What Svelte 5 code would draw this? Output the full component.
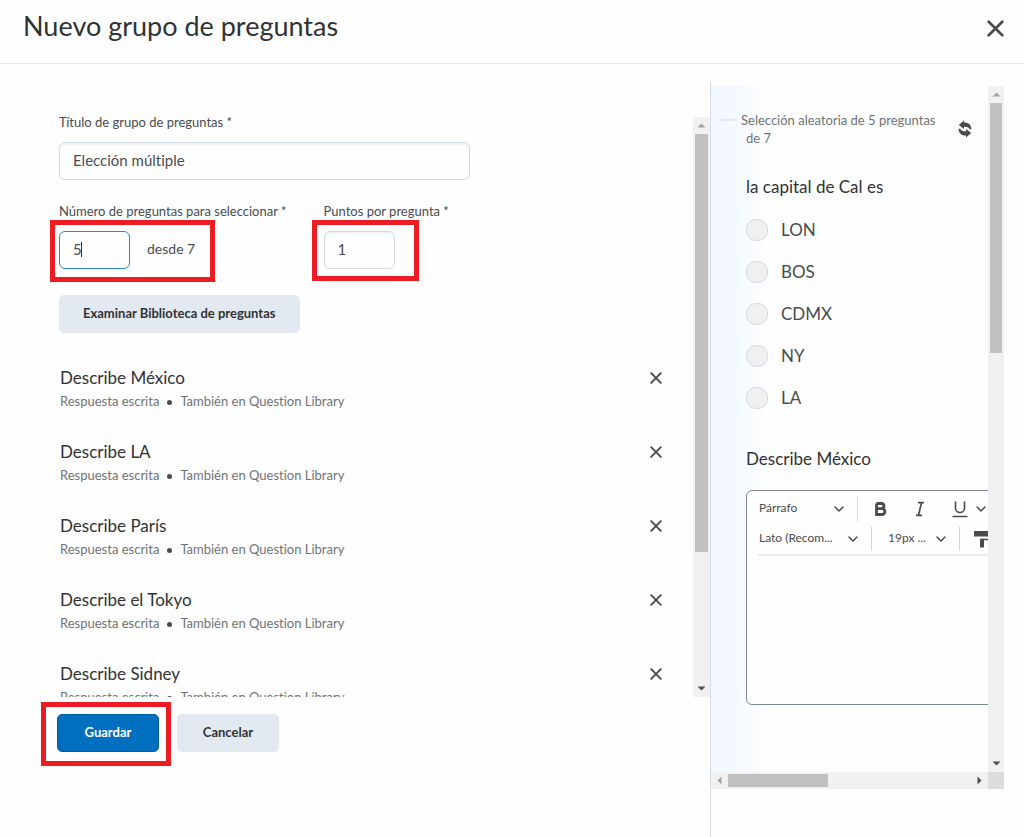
<script>
  let groupTitle = $state('Elección múltiple');
  let count = $state('5');
  let points = $state('1');
  const questions = ['Describe México', 'Describe LA', 'Describe París', 'Describe el Tokyo', 'Describe Sidney'];
  const answers = ['LON', 'BOS', 'CDMX', 'NY', 'LA'];
</script>

{#snippet cross(size)}
  <svg width={size} height={size} viewBox="0 0 12 12" aria-hidden="true">
    <path d="M1.2 1.2 10.8 10.8M10.8 1.2 1.2 10.8" fill="none" stroke="#494c4e" stroke-width="1.9" stroke-linecap="round" />
  </svg>
{/snippet}

{#snippet chevron()}
  <svg class="chevron" width="10" height="6" viewBox="0 0 10 6" aria-hidden="true">
    <path d="M1 1 5 5 9 1" fill="none" stroke="#494c4e" stroke-width="1.5" stroke-linecap="round" stroke-linejoin="round" />
  </svg>
{/snippet}

{#snippet arrow(points, color)}
  <svg class="arrow" width="17" height="17" viewBox="0 0 17 17" aria-hidden="true"><polygon {points} fill={color} /></svg>
{/snippet}

<div class="dialog" role="dialog" aria-labelledby="heading">
  <header>
    <h1 id="heading">Nuevo grupo de preguntas</h1>
    <button class="icon-button" aria-label="Cerrar">{@render cross(17)}</button>
  </header>

  <main>
    <section class="form">
      <div class="scroller">
        <div class="fields">
          <label for="title">Título de grupo de preguntas&nbsp;*</label>
          <input id="title" class="title" type="text" bind:value={groupTitle} />

          <div class="pair">
            <div class="field">
              <label for="count">Número de preguntas para seleccionar&nbsp;*</label>
              <div class="marked count">
                <input id="count" type="text" bind:value={count} />
                <span class="caret"></span>
                <span class="total">desde 7</span>
              </div>
            </div>
            <div class="field">
              <label for="points">Puntos por pregunta&nbsp;*</label>
              <div class="marked points">
                <input id="points" type="text" bind:value={points} />
              </div>
            </div>
          </div>

          <button class="button browse">Examinar Biblioteca de preguntas</button>

          <ul>
            {#each questions as name}
              <li>
                <div>
                  <div class="name">{name}</div>
                  <div class="meta"><span>Respuesta escrita</span><i></i><span>También en Question Library</span></div>
                </div>
                <button class="icon-button" aria-label="Quitar {name}">{@render cross(12)}</button>
              </li>
            {/each}
          </ul>
        </div>
        <div class="bar vertical form-bar">
          {@render arrow('4.5,10.5 8.5,6.5 12.5,10.5', '#a3a3a3')}
          <div class="track"><div class="thumb" style="height: 76.5%"></div></div>
          {@render arrow('4.5,6.5 12.5,6.5 8.5,10.5', '#505050')}
        </div>
      </div>
      <footer>
        <div class="marked save"><button class="button primary">Guardar</button></div>
        <button class="button">Cancelar</button>
      </footer>
    </section>

    <section class="preview">
      <div class="content">
        <div class="selection">
          <p>Selección aleatoria de 5 preguntas de 7</p>
          <button class="icon-button" aria-label="Actualizar">
            <svg width="16" height="18" viewBox="0 0 16 18" aria-hidden="true">
              <path d="M1.800 5 7 .5V2.500C11.500 2.500 14.200 4.500 14.500 9.300L12.800 9.300C11.800 7.300 9.800 6.700 7 6.800V9Z" fill="#494c4e" />
              <path d="M14.200 13 9 17.500V15.500C4.500 15.500 1.800 13.500 1.500 8.700L3.200 8.700C4.200 10.700 6.200 11.300 9 11.200V9Z" fill="#494c4e" />
            </svg>
          </button>
        </div>

        <fieldset>
          <legend>la capital de Cal es</legend>
          {#each answers as answer}
            <label class="answer"><input type="radio" name="capital" value={answer} />{answer}</label>
          {/each}
        </fieldset>

        <h2>Describe México</h2>
        <div class="editor">
          <div class="toolbar">
            <div class="tools">
              <div class="select paragraph">
                <select aria-label="Formato"><option>Párrafo</option></select>{@render chevron()}
              </div>
              <button class="tool" aria-label="Negrita">
                <svg width="18" height="18" viewBox="0 0 18 18" aria-hidden="true">
                  <path d="M4.500 3.500V14.500H10A2.900 2.900 0 0 0 10 8.700H4.500M4.500 3.500H9.300A2.600 2.600 0 0 1 9.300 8.700" fill="none" stroke="#494c4e" stroke-width="2.800" />
                </svg>
              </button>
              <button class="tool" aria-label="Cursiva">
                <svg width="18" height="18" viewBox="0 0 18 18" aria-hidden="true">
                  <path d="M7 2.700H13M5 15.300H11M10.500 2.700 7.500 15.300" fill="none" stroke="#494c4e" stroke-width="1.700" />
                </svg>
              </button>
              <button class="tool underline" aria-label="Subrayado">
                <svg width="18" height="18" viewBox="0 0 18 18" aria-hidden="true">
                  <path d="M4.500 1.500V8A4.500 4.500 0 0 0 13.500 8V1.500M1.500 16.500H16.500" fill="none" stroke="#494c4e" stroke-width="1.600" />
                </svg>
                {@render chevron()}
              </button>
            </div>
            <div class="tools">
              <div class="select family">
                <select aria-label="Fuente"><option>Lato (Recom...</option></select>{@render chevron()}
              </div>
              <div class="select size">
                <select aria-label="Tamaño"><option>19px ...</option></select>{@render chevron()}
              </div>
              <button class="tool" aria-label="Copiar formato">
                <svg width="18" height="18" viewBox="0 0 18 18" aria-hidden="true">
                  <path d="M0 1H17V6.500H0Z" fill="#494c4e" />
                  <path d="M17 4H19V9.500H9V17" fill="none" stroke="#494c4e" stroke-width="1.600" />
                  <path d="M6 8.700H10V17.500H6Z" fill="#494c4e" />
                </svg>
              </button>
            </div>
          </div>
          <textarea aria-label="Respuesta"></textarea>
        </div>
      </div>
      <div class="bar vertical">
        {@render arrow('4.5,10.5 8.5,6.5 12.5,10.5', '#a3a3a3')}
        <div class="track"><div class="thumb" style="height: 38.4%"></div></div>
        {@render arrow('4.5,6.5 12.5,6.5 8.5,10.5', '#505050')}
      </div>
      <div class="bar horizontal">
        {@render arrow('10.5,4.5 6.5,8.5 10.5,12.5', '#a3a3a3')}
        <div class="track"><div class="thumb" style="width: 41%"></div></div>
        {@render arrow('6.5,4.5 10.5,8.5 6.5,12.5', '#505050')}
      </div>
      <div class="corner"></div>
    </section>
  </main>
</div>

<style>
  :global(body) { margin: 0; background: #fefefe; }
  * { box-sizing: border-box; }
  .dialog {
    height: 100vh; min-height: 600px; display: flex; flex-direction: column; overflow: hidden;
    font-family: Lato, sans-serif; font-size: 13px; line-height: 18px; color: #494c4e;
    font-variant-ligatures: none;
  }
  button, input, select, textarea { font: inherit; color: inherit; }
  button { cursor: pointer; }
  h1, h2, p, ul, fieldset { margin: 0; padding: 0; border: 0; font-weight: 400; }

  header {
    flex: none; height: 64px; display: flex; align-items: center; justify-content: space-between;
    padding: 0 20px 12px 23px; border-bottom: 1px solid #e3e9f1;
  }
  h1 { font-size: 27px; line-height: 36px; color: #303335; }
  .icon-button { display: grid; place-items: center; padding: 0; border: 0; background: none; }
  header .icon-button { padding-top: 6px; }

  main { flex: 1; min-height: 0; display: grid; grid-template-columns: minmax(0, 1fr) 314px; }
  .form { min-height: 0; display: flex; flex-direction: column; padding: 49px 0 85px; }
  .scroller { flex: 1; min-height: 0; display: flex; overflow: hidden; }
  .fields { flex: 1; min-width: 0; padding-left: 59px; }
  .fields label { display: block; margin-bottom: 11px; white-space: nowrap; }
  input[type='text'] {
    display: block; height: 38px; padding: 0 13px 2px; border: 1px solid #d3d9e3; border-radius: 6px;
    background: #fefefe; box-shadow: inset 0 2px 0 #f1f4f8; font-size: 15px; outline: none;
  }
  .title { width: 65%; max-width: 411px; }
  .pair { display: flex; gap: 37px; margin-top: 22px; }
  .marked { position: relative; display: flex; align-items: center; width: max-content; font-size: 14px; }
  .marked::after { content: ''; position: absolute; border: 5px solid #ed1c24; pointer-events: none; }
  .marked input[type='text'] { width: 71px; }
  .count { gap: 17px; }
  .count input[type='text'] { border-color: #2c86d0; box-shadow: none; }
  .count::after { inset: -11px -20px -13px -9px; }
  .points::after { inset: -11px -24px -12px -12px; }
  .save::after { inset: -12px -12px -14px -16px; }
  .total { padding-bottom: 2px; }
  .caret { position: absolute; left: 22px; top: 11px; width: 1px; height: 15px; background: #303335; }

  .button {
    height: 38px; min-width: 102px; padding: 0 24px 2px; border: 0; border-radius: 5px;
    background: #e3e9f1; color: #303335; font-size: 13px; font-weight: 700;
  }
  .browse { margin-top: 26px; }
  .primary { background: #006fbf; border: 1px solid #0060ab; color: #fff; }

  ul { list-style: none; margin-top: 33px; padding: 0 31px 0 1px; }
  li { height: 74px; display: flex; justify-content: space-between; align-items: flex-start; }
  li .icon-button { height: 24px; }
  .name { font-size: 17px; line-height: 24px; color: #303335; }
  .meta { display: flex; align-items: center; gap: 8px; margin-top: 2px; color: #6e7376; }
  .meta i { width: 5px; height: 5px; border-radius: 50%; background: #494c4e; margin-top: 3px; }

  footer { flex: none; display: flex; gap: 18px; padding: 17px 0 0 57px; }

  .bar { display: flex; background: #f1f1f1; }
  .vertical { flex-direction: column; width: 17px; }
  .form-bar { margin-top: 4px; }
  .arrow { flex: none; display: block; }
  .track { flex: 1; min-width: 0; min-height: 0; }
  .thumb { background: #c1c1c1; }
  .vertical .thumb { margin: 0 2px; }
  .horizontal .track { display: flex; padding: 2px 0; }
  .corner { background: #dcdcdc; }

  .preview {
    min-height: 0; margin-top: 18px; padding: 4px 20px 48px 0; border-left: 1px solid #d3dbea;
    display: grid; grid-template: minmax(0, 1fr) 17px / minmax(0, 1fr) 16px;
  }
  .preview .vertical { width: 16px; }
  .content {
    min-width: 0; overflow: hidden; padding: 25px 0 0 35px;
    background: linear-gradient(90deg, #f3f9ff 20px, #fefefe 58px);
  }
  .selection { display: flex; justify-content: space-between; align-items: center; padding-right: 15px; }
  .selection p { position: relative; width: 190px; text-indent: -5px; color: #6e7376; }
  .selection p::before { content: ''; position: absolute; left: -26px; top: 8px; width: 17px; height: 2px; background: #e3e9f1; }
  fieldset { margin-top: 28px; }
  legend { padding: 0; margin-bottom: 20px; font-size: 17px; line-height: 24px; color: #303335; }
  .answer { display: flex; align-items: center; gap: 13px; height: 22px; margin-bottom: 20px; font-size: 17px; }
  .answer input {
    appearance: none; width: 22px; height: 22px; margin: 0; border: 1px solid #d3d9e3;
    border-radius: 10px; background: #f0f0f0;
  }
  h2 { margin: 18px 0 19px; font-size: 17px; line-height: 24px; color: #303335; }
  .editor {
    width: 480px; height: 215px; display: flex; flex-direction: column; padding: 3px 11px;
    border: 1px solid #7c8695; border-radius: 6px; background: #fefefe;
  }
  .toolbar { border-bottom: 2px solid #e8ecf2; }
  .tools { display: flex; align-items: center; height: 30px; }
  .select { display: grid; align-items: center; height: 24px; border-right: 1px solid #cdd5dc; }
  .select > :global(*) { grid-area: 1 / 1; }
  .select .chevron { justify-self: end; margin-right: 13px; pointer-events: none; }
  select { width: 100%; height: 24px; padding: 0 0 2px; border: 0; background: none; appearance: none; outline: none; font-size: 12px; }
  .paragraph { width: 100px; padding-left: 1px; }
  .family { width: 114px; padding-left: 1px; }
  .size { width: 88px; padding-left: 16px; }
  .tool { display: flex; align-items: center; gap: 7px; height: 24px; padding: 0; border: 0; background: none; margin-left: 14px; }
  .tool + .tool { margin-left: 21px; }
  .tool.underline { margin-left: 22px; }
  textarea { flex: 1; border: 0; background: none; resize: none; outline: none; }
</style>
